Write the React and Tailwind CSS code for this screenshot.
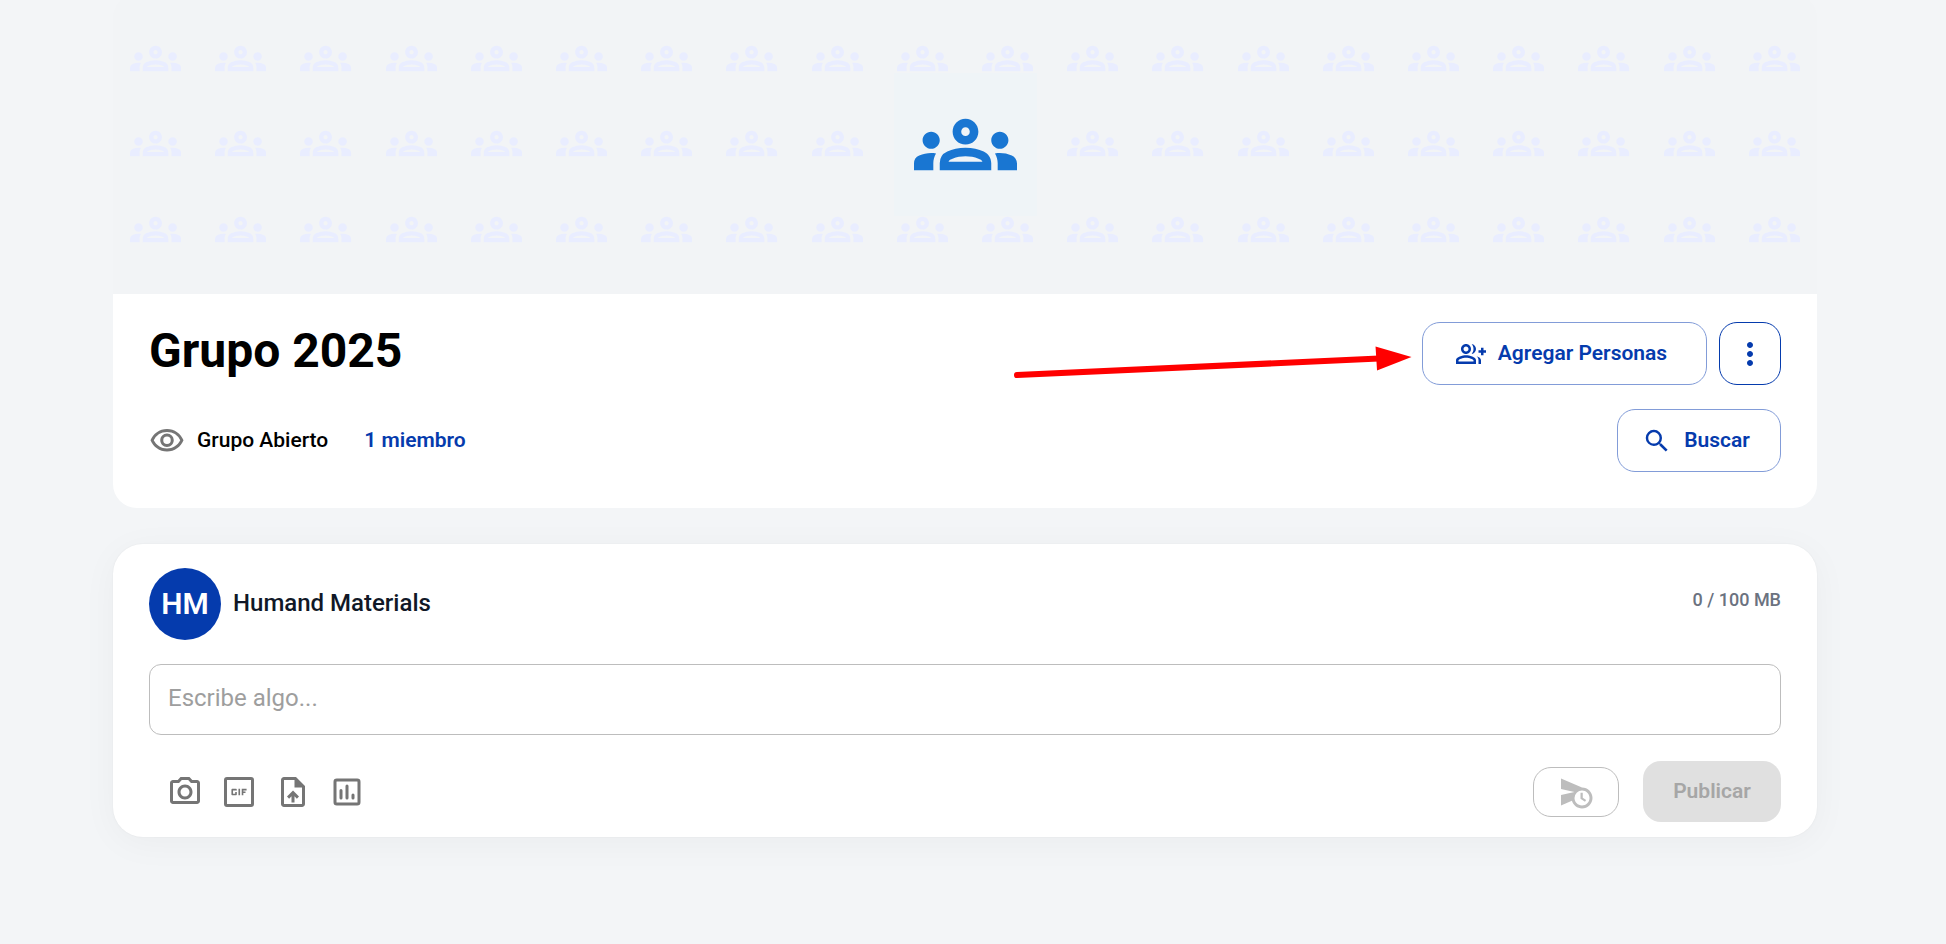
import { useState } from 'react';
import {
    MdGif,
    MdMoreVert,
    MdOutlineGroupAdd,
    MdOutlineGroups,
    MdOutlinePhotoCamera,
    MdOutlineUploadFile,
    MdOutlineVisibility,
    MdScheduleSend,
    MdSearch,
} from 'react-icons/md';

// 20 columns x 3 rows of faint icons behind the group logo
const patternCells = Array.from({ length: 60 }, (_, index) => index);

function GifIcon() {
    return (
        <span className="flex size-9 items-center justify-center">
            <span className="flex size-[30px] items-center justify-center rounded-[3px] border-3">
                <MdGif className="size-[26px] shrink-0" />
            </span>
        </span>
    );
}

// Poll icon with rounded bars
function PollIcon() {
    return (
        <svg viewBox="0 0 24 24" className="size-9" fill="none" stroke="currentColor" strokeWidth="2" aria-hidden="true">
            <rect x="4" y="4" width="16" height="16" rx="1.2" />
            <path d="M8 11v5M12 8v8M16 14v2" strokeLinecap="round" />
        </svg>
    );
}

const attachments = [
    { id: 'photo', label: 'Foto', icon: <MdOutlinePhotoCamera className="size-9" /> },
    { id: 'gif', label: 'GIF', icon: <GifIcon /> },
    { id: 'file', label: 'Archivo', icon: <MdOutlineUploadFile className="size-9" /> },
    { id: 'poll', label: 'Encuesta', icon: <PollIcon /> },
];

function Cover() {
    return (
        <div className="relative flex h-[300px] items-center justify-center overflow-hidden rounded-t-3xl bg-[#f2f4f6]">
            <div className="grid w-full grid-cols-20">
                {patternCells.map((cell) => (
                    <div key={cell} className="flex aspect-square items-center justify-center">
                        <MdOutlineGroups className="size-3/5 text-[#e9edff]" />
                    </div>
                ))}
            </div>
            <div className="absolute bg-[#eff4f7] p-5">
                <MdOutlineGroups className="size-[103px] text-[#1976d2]" />
            </div>
        </div>
    );
}

function Arrow() {
    return (
        <svg
            viewBox="0 0 400 36"
            className="pointer-events-none absolute top-6 right-full mr-[10px] h-9 w-[400px] text-[#ff0000]"
            aria-hidden="true"
        >
            <path d="M5 29 L367 12.5" stroke="currentColor" strokeWidth="6" strokeLinecap="round" />
            <path d="M363.5 0.5 L399.5 11 L365 24.5 Z" fill="currentColor" />
        </svg>
    );
}

function GroupHeader() {
    return (
        <header>
            <Cover />
            <div className="flex flex-col gap-6 rounded-b-3xl bg-white px-9 pt-7 pb-9">
                <div className="flex items-center justify-between">
                    <h1 className="pb-1.5 text-5xl font-bold text-black">Grupo 2025</h1>
                    <div className="relative flex gap-3">
                        <Arrow />
                        <button className="flex h-[63px] w-[285px] items-center justify-center gap-3 rounded-[18px] border border-[#829cd8] pr-1.5 text-[21px] font-semibold text-[#053bad]">
                            <MdOutlineGroupAdd className="size-[30px]" />
                            Agregar Personas
                        </button>
                        <button
                            aria-label="Más opciones"
                            className="flex h-[63px] w-[62px] items-center justify-center rounded-[18px] border border-[#053bad] text-[#053bad]"
                        >
                            <MdMoreVert className="size-9" />
                        </button>
                    </div>
                </div>
                <div className="flex items-center justify-between">
                    <div className="flex items-center text-[21px] font-medium">
                        <MdOutlineVisibility className="mr-3 size-9 text-[#757575]" />
                        <span className="mr-9 text-black">Grupo Abierto</span>
                        <a href="#miembros" className="font-semibold text-[#053bad]">
                            1 miembro
                        </a>
                    </div>
                    <button className="flex h-[63px] w-[164px] items-center justify-center gap-3 rounded-[18px] border border-[#829cd8] pr-1.5 text-[21px] font-semibold text-[#053bad]">
                        <MdSearch className="size-[30px]" />
                        Buscar
                    </button>
                </div>
            </div>
        </header>
    );
}

function Composer() {
    const [text, setText] = useState('');

    return (
        <section className="rounded-[30px] bg-white px-9 pt-6 pb-[15px] shadow-[0_0_2px_rgba(0,0,0,0.06),0_6px_36px_rgba(0,0,0,0.04)]">
            <div className="flex items-center gap-3">
                <div className="flex size-[72px] items-center justify-center rounded-full bg-[#053bad] text-3xl font-semibold text-white">
                    HM
                </div>
                <span className="flex-1 pb-0.5 text-2xl font-medium text-[#111827]">Humand Materials</span>
                <span className="pb-2 text-lg font-medium text-[#6b7280]">0 / 100 MB</span>
            </div>
            <input
                type="text"
                aria-label="Escribe algo"
                placeholder="Escribe algo..."
                value={text}
                onChange={(e) => setText(e.target.value)}
                className="mt-6 block h-[71px] w-full rounded-xl border border-[#bdbdbd] px-[18px] pb-1 text-2xl text-[#111827] placeholder:text-[#9e9e9e]"
            />
            <div className="mt-[26px] flex items-center justify-between pl-[18px]">
                <div className="flex gap-[18px] text-[#757575]">
                    {attachments.map((item) => (
                        <button key={item.id} aria-label={item.label}>
                            {item.icon}
                        </button>
                    ))}
                </div>
                <div className="flex items-center gap-6">
                    <button
                        aria-label="Programar publicación"
                        disabled
                        className="flex h-[50px] w-[86px] items-center justify-center rounded-[18px] border border-[#bdbdbd] text-[#bdbdbd]"
                    >
                        <MdScheduleSend className="size-9" />
                    </button>
                    <button
                        disabled
                        className="h-[61px] w-[138px] rounded-[18px] bg-[#e0e0e0] text-[21px] font-semibold text-[#a6a6a6]"
                    >
                        Publicar
                    </button>
                </div>
            </div>
        </section>
    );
}

export default function App() {
    return (
        <div className="min-h-screen overflow-hidden bg-[#f3f5f7] font-[Roboto,sans-serif]">
            {/* Page is slightly scrolled, the cover starts above the fold */}
            <main className="-mt-1.5 flex flex-col gap-9 pr-[129px] pb-9 pl-[113px]">
                <GroupHeader />
                <Composer />
            </main>
        </div>
    );
}
